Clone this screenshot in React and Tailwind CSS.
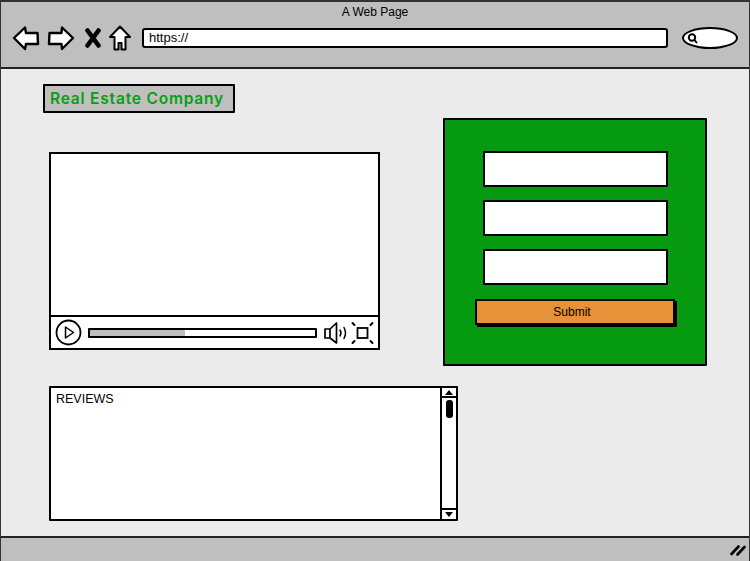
import React from "react";

function BackIcon() {
  return (
    <svg width="28" height="26" viewBox="0 0 28 26" className="ml-[12px]">
      <path d="M2 13 L13 2.5 L14 8 L25.5 8 L26 19 L14 19 L13 24 Z" fill="#fff" stroke="#000" strokeWidth="2.4" strokeLinejoin="round" />
    </svg>
  );
}

function ForwardIcon() {
  return (
    <svg width="28" height="26" viewBox="0 0 28 26" className="ml-[7px]">
      <path d="M26 13 L15 2.5 L14.5 8 L2.5 8 L2 19 L14.5 19 L15 24 Z" fill="#fff" stroke="#000" strokeWidth="2.4" strokeLinejoin="round" />
    </svg>
  );
}

function StopIcon() {
  return (
    <svg width="16" height="20" viewBox="0 0 16 20" className="ml-[10px]">
      <path d="M2.5 2.5 L13.5 17.5 M13.5 2.5 L2.5 17.5" fill="none" stroke="#000" strokeWidth="4.6" strokeLinecap="round" />
    </svg>
  );
}

function HomeIcon() {
  return (
    <svg width="22" height="26" viewBox="0 0 22 26" className="ml-[8px]">
      <path d="M11 1.5 L21 12 L16.5 12 L16.5 24.5 L12.5 24.5 L12.5 18 L9.5 18 L9.5 24.5 L5.5 24.5 L5.5 12 L1 12 Z" fill="#fff" stroke="#000" strokeWidth="2" strokeLinejoin="round" />
    </svg>
  );
}

function SearchBox() {
  return (
    <div className="ml-[14px] w-[56px] h-[22px] bg-white border-2 border-black rounded-[50%] flex items-center pl-[2px]">
      <svg width="13" height="13" viewBox="0 0 13 13">
        <circle cx="6" cy="5.5" r="3.2" fill="none" stroke="#000" strokeWidth="2" />
        <path d="M8.5 8 L10.5 10.5" stroke="#000" strokeWidth="2" strokeLinecap="round" />
      </svg>
    </div>
  );
}

function PlayerControls() {
  return (
    <div className="h-[33px] border-t-2 border-black flex items-center pl-[4px]">
      <svg width="27" height="27" viewBox="0 0 27 27" className="shrink-0">
        <circle cx="13.5" cy="13.5" r="12" fill="#fff" stroke="#000" strokeWidth="1.8" />
        <path d="M10.5 8 L18.5 13.5 L10.5 19 Z" fill="none" stroke="#000" strokeWidth="1.5" strokeLinejoin="round" />
      </svg>
      <div className="ml-[6px] w-[229px] h-[10px] border-2 border-black bg-white flex shrink-0 rounded-[1px]">
        <div className="w-[95px] bg-[#bfbfbf]" />
      </div>
      <svg width="26" height="24" viewBox="0 0 26 24" className="ml-[6px] shrink-0">
        <path d="M2 8 L7 8 L13.5 2 L13.5 22 L7 17 L2 17 Z M7 8 L7 17" fill="#fff" stroke="#000" strokeWidth="1.7" strokeLinejoin="round" />
        <path d="M17 9 Q19 12 17 15 M21 6.5 Q24 12 21 17.5" fill="none" stroke="#000" strokeWidth="1.5" strokeLinecap="round" />
      </svg>
      <svg width="24" height="24" viewBox="0 0 24 24" className="ml-[2px] shrink-0">
        <rect x="6.5" y="7" width="10" height="10" fill="#fff" stroke="#000" strokeWidth="1.8" />
        <path d="M1.5 2 L3.5 4 M21.5 2 L19.5 4 M1.5 22 L3.5 20 M21.5 22 L19.5 20" stroke="#000" strokeWidth="2" strokeLinecap="round" />
      </svg>
    </div>
  );
}

function FormField() {
  return (
    <div className="w-[185px] h-[36px] ml-[38px] bg-white border-2 border-black rounded-[1px]" />
  );
}

function ScrollBar() {
  return (
    <div className="w-[16px] h-full border-l-2 border-black flex flex-col items-center">
      <div className="w-full h-[10px] border-b-2 border-black flex items-center justify-center">
        <div className="w-0 h-0 border-x-[4px] border-x-transparent border-b-[5px] border-b-black" />
      </div>
      <div className="mt-[2px] w-[7px] h-[18px] bg-black rounded-[3px]" />
      <div className="mt-auto w-full h-[11px] border-t-2 border-black flex items-center justify-center">
        <div className="w-0 h-0 border-x-[4px] border-x-transparent border-t-[5px] border-t-black" />
      </div>
    </div>
  );
}

export default function App() {
  return (
    <div className="w-[750px] h-[561px] flex flex-col bg-[#ebebeb] border-t-2 border-x border-[#333] font-['Liberation_Sans',sans-serif] text-black overflow-hidden">
      {/* browser toolbar */}
      <div className="h-[67px] shrink-0 bg-[#bfbfbf] border-b-2 border-[#222]">
        <div className="h-[20px] text-center text-[12px] leading-[20px]">A Web Page</div>
        <div className="flex items-center mt-[3px] -ml-[1px]">
          <BackIcon />
          <ForwardIcon />
          <StopIcon />
          <HomeIcon />
          <div className="ml-[11px] w-[526px] h-[20px] bg-white border-2 border-black rounded-[3px] pl-[5px] text-[13px] leading-[16px]">
            https://
          </div>
          <SearchBox />
        </div>
      </div>

      {/* page content */}
      <div className="flex-1 pl-[42px] pt-[15px]">
        <div className="w-[192px] h-[29px] bg-[#bfbfbf] border-2 border-black rounded-[1px] pl-[5px] text-[#069f12] text-[15.5px] leading-[25px] font-['Inter',sans-serif] font-semibold tracking-[0.8px] whitespace-nowrap">
          Real Estate Company
        </div>
        <div className="flex mt-[5px]">
          <div className="ml-[6px] mt-[34px] w-[331px] h-[198px] bg-white border-2 border-black flex flex-col">
            <div className="flex-1" />
            <PlayerControls />
          </div>
          <div className="ml-[63px] w-[264px] h-[248px] bg-[#059a10] border-2 border-black rounded-[1px] pt-[31px] flex flex-col">
            <FormField />
            <div className="mt-[13px]"><FormField /></div>
            <div className="mt-[13px]"><FormField /></div>
            <div className="ml-[30px] mt-[14px] w-[200px] h-[26px] bg-[#e79239] border-2 border-black shadow-[2px_2px_0_#000] pr-[6px] text-center text-[12px] leading-[22px]">
              Submit
            </div>
          </div>
        </div>
        <div className="ml-[6px] mt-[20px] w-[409px] h-[135px] bg-white border-2 border-black rounded-[1px] flex">
          <div className="flex-1 pl-[5px] pt-[2px] text-[12.5px] leading-[18px]">REVIEWS</div>
          <ScrollBar />
        </div>
      </div>

      {/* status bar */}
      <div className="h-[25px] shrink-0 bg-[#bfbfbf] border-t-2 border-[#222] flex items-center justify-end pr-[3px]">
        <svg width="16" height="12" viewBox="0 0 16 12">
          <path d="M1.5 10 L8.5 2.5 M7.5 10.5 L14.5 3" stroke="#000" strokeWidth="2.6" strokeLinecap="round" />
        </svg>
      </div>
    </div>
  );
}
